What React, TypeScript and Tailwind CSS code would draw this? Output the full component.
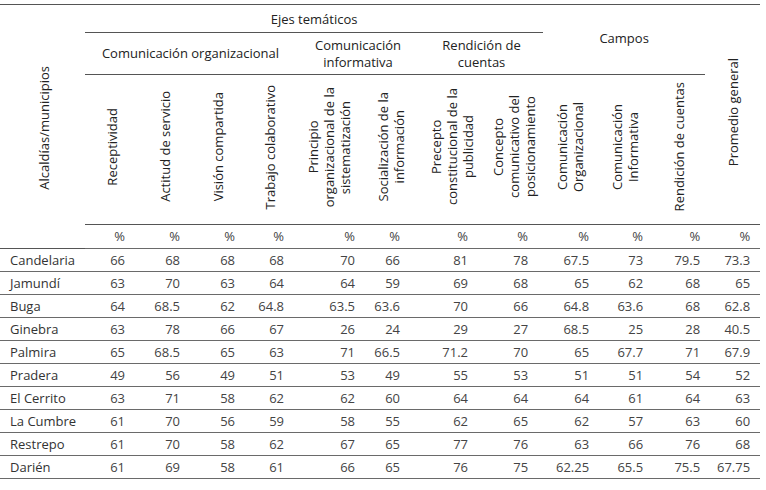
const cols = [
  { w: "w-[53px]", pr: "pr-[13px]" },
  { w: "w-[53px]", pr: "pr-[11px]" },
  { w: "w-[53px]", pr: "pr-[9px]" },
  { w: "w-[52px]", pr: "pr-[12px]" },
  { w: "w-[66px]", pr: "pr-[7px]" },
  { w: "w-[58px]", pr: "pr-[20px]" },
  { w: "w-[64px]", pr: "pr-[16px]" },
  { w: "w-[59px]", pr: "pr-[15px]" },
  { w: "w-[54px]", pr: "pr-[8px]" },
  { w: "w-[55px]", pr: "pr-[9px]" },
  { w: "w-[53px]", pr: "pr-[5px]" },
  { w: "w-[55px]", pr: "pr-[10px]" },
];

const subHeads: string[][] = [
  ["Receptividad"],
  ["Actitud de servicio"],
  ["Visión compartida"],
  ["Trabajo colaborativo"],
  ["Principio", "organizacional de la", "sistematización"],
  ["Socialización de la", "información"],
  ["Precepto", "constitucional de la", "publicidad"],
  ["Concepto", "comunicativo del", "posicionamiento"],
  ["Comunicación", "Organizacional"],
  ["Comunicación", "Informativa"],
  ["Rendición de cuentas"],
];

const rows: [string, string[]][] = [
  ["Candelaria", ["66", "68", "68", "68", "70", "66", "81", "78", "67.5", "73", "79.5", "73.3"]],
  ["Jamundí", ["63", "70", "63", "64", "64", "59", "69", "68", "65", "62", "68", "65"]],
  ["Buga", ["64", "68.5", "62", "64.8", "63.5", "63.6", "70", "66", "64.8", "63.6", "68", "62.8"]],
  ["Ginebra", ["63", "78", "66", "67", "26", "24", "29", "27", "68.5", "25", "28", "40.5"]],
  ["Palmira", ["65", "68.5", "65", "63", "71", "66.5", "71.2", "70", "65", "67.7", "71", "67.9"]],
  ["Pradera", ["49", "56", "49", "51", "53", "49", "55", "53", "51", "51", "54", "52"]],
  ["El Cerrito", ["63", "71", "58", "62", "62", "60", "64", "64", "64", "61", "64", "63"]],
  ["La Cumbre", ["61", "70", "56", "59", "58", "55", "62", "65", "62", "57", "63", "60"]],
  ["Restrepo", ["61", "70", "58", "62", "67", "65", "77", "76", "63", "66", "76", "68"]],
  ["Darién", ["61", "69", "58", "61", "66", "65", "76", "75", "62.25", "65.5", "75.5", "67.75"]],
];

function Vertical({ lines }: { lines: string[] }) {
  return (
    <div className="inline-block [writing-mode:vertical-rl] rotate-180 text-center leading-[16px] whitespace-nowrap">
      {lines.map((l, i) => (
        <span key={i}>
          {l}
          {i < lines.length - 1 && <br />}
        </span>
      ))}
    </div>
  );
}

export default function App() {
  return (
    <div className="w-[766px] h-[490px] bg-white pt-[4px] font-['Open_Sans',sans-serif] text-[13px] text-[#222]">
      <table className="table-fixed w-[760px] border-collapse border-t border-[#555]">
        <colgroup>
          <col className="w-[85px]" />
          {cols.map((c, i) => (
            <col key={i} className={c.w} />
          ))}
        </colgroup>
        <thead>
          <tr className="h-[28px]">
            <th rowSpan={4} className="font-normal align-middle border-b border-[#555]">
              <div className="pl-[2px] pt-[8px]">
                <Vertical lines={["Alcaldías/municipios"]} />
              </div>
            </th>
            <th colSpan={8} className="font-normal border-b border-[#555] pt-[2px]">
              Ejes temáticos
            </th>
            <th colSpan={3} rowSpan={2} className="font-normal border-b border-[#555] align-middle pb-[2px]">
              Campos
            </th>
            <th rowSpan={3} className="font-normal align-middle border-b border-[#555]">
              <Vertical lines={["Promedio general"]} />
            </th>
          </tr>
          <tr className="h-[42px]">
            <th colSpan={4} className="font-normal border-b border-[#555] leading-[17px]">
              Comunicación organizacional
            </th>
            <th colSpan={2} className="font-normal border-b border-[#555] leading-[17px]">
              Comunicación
              <br />
              informativa
            </th>
            <th colSpan={2} className="font-normal border-b border-[#555] leading-[17px]">
              Rendición de
              <br />
              cuentas
            </th>
          </tr>
          <tr className="h-[150px]">
            {subHeads.map((s, i) => (
              <th key={i} className="font-normal align-middle border-b border-[#555]">
                <Vertical lines={s} />
              </th>
            ))}
          </tr>
          <tr className="h-[24px]">
            {cols.map((c, i) => (
              <th key={i} className={`font-normal text-right text-[13px] text-[#444] ${c.pr}`}>
                %
              </th>
            ))}
          </tr>
        </thead>
        <tbody>
          {rows.map(([name, vals]) => (
            <tr key={name} className="h-[23px] border-t border-[#6a6a6a]">
              <td className="pl-[10px] text-[#333] pt-[2px]">{name}</td>
              {vals.map((v, i) => (
                <td key={i} className={`text-right text-[#444] pt-[2px] ${cols[i].pr}`}>
                  {v}
                </td>
              ))}
            </tr>
          ))}
          <tr className="border-t border-[#6a6a6a]">
            <td colSpan={13}></td>
          </tr>
        </tbody>
      </table>
    </div>
  );
}
